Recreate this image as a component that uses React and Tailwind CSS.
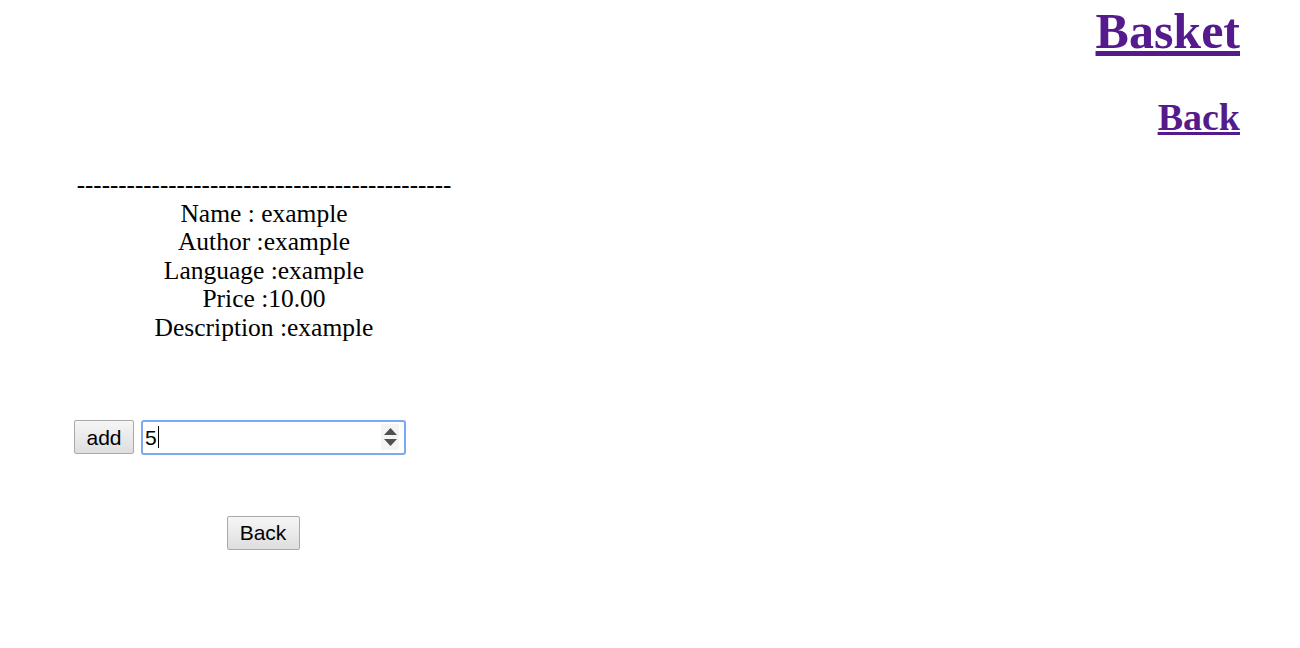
export default function App() {
  const dashes = '-'.repeat(45);
  return (
    <div className="min-h-[648px] bg-white font-['Liberation_Serif',serif] text-black">
      <div className="flex flex-col items-end pr-[60px]">
        <a href="#" className="mt-[2px] text-[50px] font-bold leading-[58px] text-[#551a8b] underline">Basket</a>
        <a href="#" className="mt-[35px] text-[38px] font-bold leading-[44px] text-[#551a8b] underline">Back</a>
      </div>

      <div className="ml-[74px] mt-[32px] w-[380px]">
        <div className="text-center text-[25.5px] leading-[28.6px]">
          <div className="whitespace-nowrap text-[25px]">{dashes}</div>
          <div>Name : example</div>
          <div>Author :example</div>
          <div>Language :example</div>
          <div>Price :10.00</div>
          <div>Description :example</div>
        </div>

        <div className="mt-[77px] flex items-center gap-[7px] font-['Liberation_Sans',sans-serif] text-[21px]">
          <button className="h-[34px] w-[60px] rounded-[2px] border border-[#a9a9a9] bg-gradient-to-b from-[#f6f6f6] to-[#dedede] leading-none text-black">add</button>
          <div className="flex h-[35px] w-[265px] items-center rounded-[3px] border-2 border-[#7ba9f2] pl-[2px] pr-[5px]">
            <span className="leading-none">5</span>
            <span className="ml-[1px] h-[22px] w-px bg-black" />
            <div className="flex-1" />
            <div className="flex h-[26px] w-[18px] flex-col items-center justify-center gap-[2px] bg-[#f4f4f4]">
              <svg width="13" height="8" viewBox="0 0 13 8"><path d="M6.5 0L13 7H0z" fill="#505050" /></svg>
              <svg width="13" height="8" viewBox="0 0 13 8"><path d="M0 1h13L6.5 8z" fill="#505050" /></svg>
            </div>
          </div>
        </div>

        <div className="mt-[61px] flex justify-center pr-[2px] font-['Liberation_Sans',sans-serif] text-[21px]">
          <button className="h-[34px] w-[73px] rounded-[2px] border border-[#a9a9a9] bg-gradient-to-b from-[#f6f6f6] to-[#dedede] leading-none text-black">Back</button>
        </div>
      </div>
    </div>
  );
}
